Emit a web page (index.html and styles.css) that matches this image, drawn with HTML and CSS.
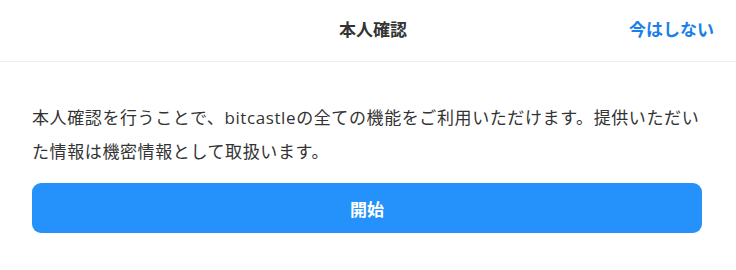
FILE: index.html
```html
<!DOCTYPE html>
<html lang="ja">
<head>
  <meta charset="UTF-8">
  <meta name="viewport" content="width=device-width, initial-scale=1.0">
  <title>本人確認</title>
  <link rel="stylesheet" href="styles.css">
</head>
<body>

  <div class="modal">
    <div class="modal-header">
      <span class="spacer"></span>
      <h1 class="modal-title">本人確認</h1>
      <a class="skip-link" href="#">今はしない</a>
    </div>

    <div class="modal-body">
      <p class="intro">本人確認を行うことで、bitcastleの全ての機能をご利用いただけます。提供いただいた情報は機密情報として取扱います。</p>
      <button class="start-btn" type="button">開始</button>
    </div>
  </div>

</body>
</html>
```

FILE: styles.css
```css
body {
  margin: 0;
  font-family: "Open Sans", "Noto Sans CJK JP", sans-serif;
  color: #333;
  background-color: #fff;
}

.modal {
  width: 736px;
}

.modal-header {
  display: grid;
  grid-template-columns: 1fr auto 1fr;
  align-items: center;
  box-sizing: border-box;
  height: 62px;
  padding: 0 22px 4px 32px;
  border-bottom: 1px solid #eeeeee;
}

.modal-title {
  margin: 0;
  font-size: 17px;
  font-weight: bold;
  color: #333;
}

.skip-link {
  justify-self: end;
  font-size: 17px;
  font-weight: bold;
  color: #1a7fe8;
  text-decoration: none;
}

.modal-body {
  padding: 39px 34px 0 32px;
}

.intro {
  margin: 0 0 14px;
  font-size: 17px;
  line-height: 34px;
  letter-spacing: 0.6px;
  color: #333;
}

.start-btn {
  display: block;
  width: 100%;
  height: 50px;
  border: none;
  border-radius: 9px;
  background-color: #2592fb;
  color: #fff;
  font-family: inherit;
  font-size: 17px;
  font-weight: bold;
  cursor: pointer;
}
```
